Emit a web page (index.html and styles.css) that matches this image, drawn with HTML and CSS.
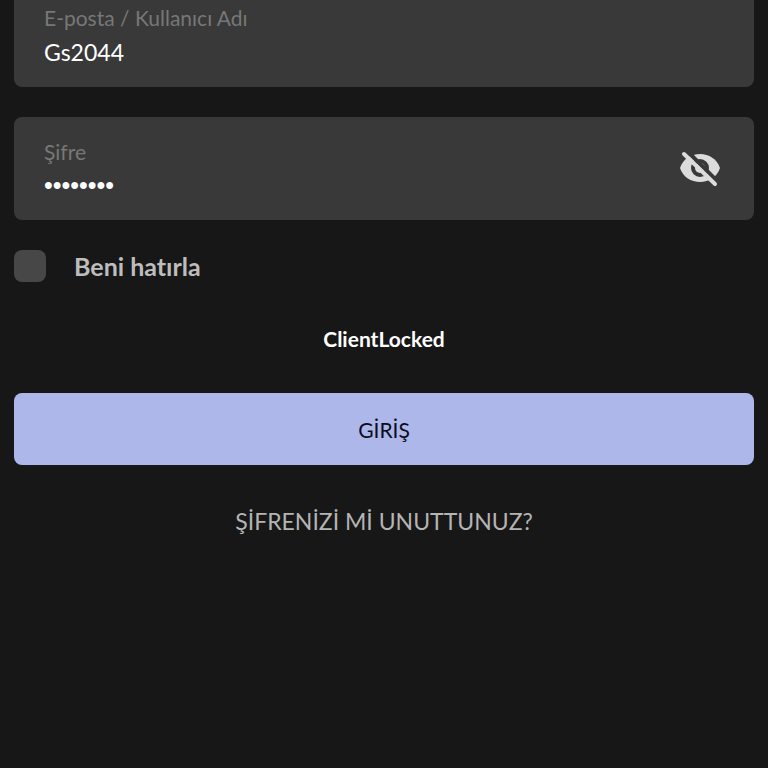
FILE: index.html
```html
<!doctype html>
<html lang="tr">
<head>
  <meta charset="utf-8">
  <meta name="viewport" content="width=device-width, initial-scale=1">
  <title>Giriş</title>
  <link rel="stylesheet" href="styles.css">
</head>
<body>
	<form class="login">
		<div class="field field-first">
			<div class="field-text">
				<label for="user">E-posta / Kullanıcı Adı</label>
				<input type="text" id="user" value="Gs2044">
			</div>
		</div>
		<div class="field">
			<div class="field-text">
				<label for="pass">Şifre</label>
				<input type="password" id="pass" value="12345678">
			</div>
			<button type="button" class="toggle" aria-label="Şifreyi göster">
				<svg viewBox="0 2 44 44">
					<path class="eye" d="M2 22C5 13 13 8 22 8s17 5 20 14c-3 9-11 14-20 14S5 31 2 22z"/>
					<circle class="iris" cx="22" cy="22" r="7"/>
					<path class="gap" d="M9 5l33 33"/>
					<path class="slash" d="M6 8l31 30"/>
				</svg>
			</button>
		</div>
		<div class="remember">
			<input type="checkbox" id="remember">
			<label for="remember">Beni hatırla</label>
		</div>
		<p class="message">ClientLocked</p>
		<button type="submit" class="submit">GİRİŞ</button>
		<a href="#" class="forgot">ŞİFRENİZİ Mİ UNUTTUNUZ?</a>
	</form>
</body>
</html>
```

FILE: styles.css
```css
*{ box-sizing:border-box; }
body{
	margin:0;
	background:#171717;
	font-family:Lato, sans-serif;
	font-variant-ligatures:none;
	color:#fff;
}
button, input{ font:inherit; color:inherit; margin:0; padding:0; border:none; }
button{ cursor:pointer; }

.login{
	display:flex;
	flex-direction:column;
	padding:0 14px;
}

.field{
	display:flex;
	align-items:center;
	justify-content:space-between;
	margin-bottom:30px;
	padding:19px 32px 17px 30px;
	background:#393939;
	border-radius:8px;
}
.field-first{ padding-top:2px; padding-bottom:18px; border-radius:0 0 8px 8px; }
.field-text{ flex:1; display:flex; flex-direction:column; }
.field label{ font-size:21px; line-height:32px; color:#777; }
.field input{ width:100%; height:35px; background:none; font-size:23px; outline:none; }
.field input[type="password"]{ font-family:"Liberation Sans", sans-serif; font-size:25px; }

.toggle{ width:44px; height:44px; background:none; }
.toggle svg{ display:block; width:44px; height:44px; fill:none; stroke-linecap:round; }
.toggle .eye{ fill:#dcdcdc; }
.toggle .iris{ stroke:#393939; stroke-width:4; }
.toggle .gap{ stroke:#393939; stroke-width:4; }
.toggle .slash{ stroke:#dcdcdc; stroke-width:4; }

.remember{ display:flex; align-items:center; gap:28px; }
.remember input{
	appearance:none;
	width:32px;
	height:32px;
	background:#474747;
	border-radius:8px;
}
.remember label{ font-size:25px; line-height:32px; font-weight:bold; color:#bdbdbd; }

.message{
	margin:39px 0 36px;
	font-size:21px;
	line-height:36px;
	font-weight:bold;
	text-align:center;
}
.submit{
	height:72px;
	background:#adb7ea;
	border-radius:8px;
	font-size:21px;
	color:#0c0c20;
}
.forgot{
	align-self:center;
	margin-top:40px;
	font-size:23px;
	line-height:32px;
	color:#b4b4b4;
	text-decoration:none;
}
```
